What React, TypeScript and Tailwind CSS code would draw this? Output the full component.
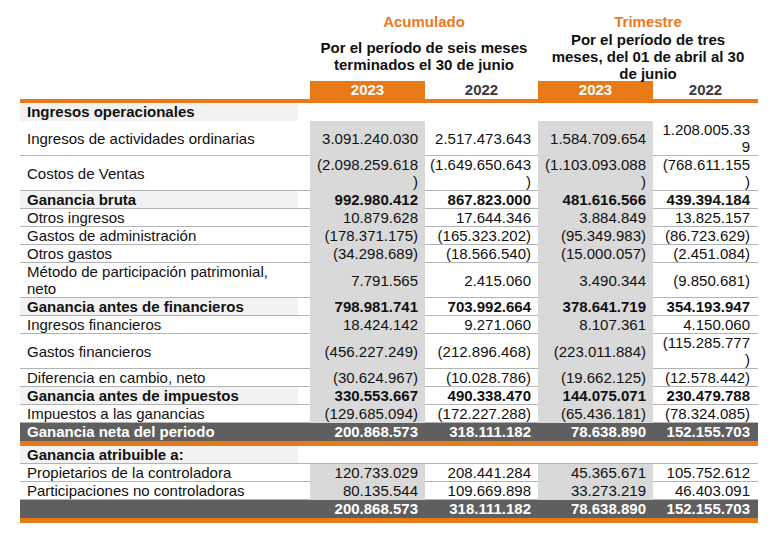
type Kind = "section" | "row" | "bold" | "total";

type Row = {
  kind: Kind;
  label: string;
  values?: string[];
  border?: boolean;
};

const rows: Row[] = [
  { kind: "section", label: "Ingresos operacionales" },
  {
    kind: "row",
    label: "Ingresos de actividades ordinarias",
    values: ["3.091.240.030", "2.517.473.643", "1.584.709.654", "1.208.005.339"],
  },
  {
    kind: "row",
    label: "Costos de Ventas",
    values: ["(2.098.259.618)", "(1.649.650.643)", "(1.103.093.088)", "(768.611.155)"],
  },
  {
    kind: "bold",
    label: "Ganancia bruta",
    values: ["992.980.412", "867.823.000", "481.616.566", "439.394.184"],
  },
  {
    kind: "row",
    label: "Otros ingresos",
    values: ["10.879.628", "17.644.346", "3.884.849", "13.825.157"],
  },
  {
    kind: "row",
    label: "Gastos de administración",
    values: ["(178.371.175)", "(165.323.202)", "(95.349.983)", "(86.723.629)"],
  },
  {
    kind: "row",
    label: "Otros gastos",
    values: ["(34.298.689)", "(18.566.540)", "(15.000.057)", "(2.451.084)"],
  },
  {
    kind: "row",
    label: "Método de participación patrimonial, neto",
    values: ["7.791.565", "2.415.060", "3.490.344", "(9.850.681)"],
  },
  {
    kind: "bold",
    label: "Ganancia antes de financieros",
    values: ["798.981.741", "703.992.664", "378.641.719", "354.193.947"],
  },
  {
    kind: "row",
    label: "Ingresos financieros",
    values: ["18.424.142", "9.271.060", "8.107.361", "4.150.060"],
  },
  {
    kind: "row",
    label: "Gastos financieros",
    values: ["(456.227.249)", "(212.896.468)", "(223.011.884)", "(115.285.777)"],
  },
  {
    kind: "row",
    label: "Diferencia en cambio, neto",
    values: ["(30.624.967)", "(10.028.786)", "(19.662.125)", "(12.578.442)"],
  },
  {
    kind: "bold",
    label: "Ganancia antes de impuestos",
    values: ["330.553.667", "490.338.470", "144.075.071", "230.479.788"],
  },
  {
    kind: "row",
    label: "Impuestos a las ganancias",
    values: ["(129.685.094)", "(172.227.288)", "(65.436.181)", "(78.324.085)"],
  },
  {
    kind: "total",
    label: "Ganancia neta del periodo",
    values: ["200.868.573", "318.111.182", "78.638.890", "152.155.703"],
  },
  { kind: "section", label: "Ganancia atribuible a:", border: true },
  {
    kind: "row",
    label: "Propietarios de la controladora",
    values: ["120.733.029", "208.441.284", "45.365.671", "105.752.612"],
  },
  {
    kind: "row",
    label: "Participaciones no controladoras",
    values: ["80.135.544", "109.669.898", "33.273.219", "46.403.091"],
  },
  {
    kind: "total",
    label: "",
    values: ["200.868.573", "318.111.182", "78.638.890", "152.155.703"],
  },
];

// padding per value column so long figures wrap like the source sheet
const colPad = ["pl-[4px] pr-[7px]", "pl-[3px] pr-[7px]", "pl-[4px] pr-[7px]", "pl-[6px] pr-[8px]"];
const grayCol = [true, false, true, false];

function ValueCell({ row, value, i }: { row: Row; value: string; i: number }) {
  const pad = colPad[i];
  if (row.kind === "total") {
    return (
      <td className={`${pad} border-b-[5px] border-[#e97817] bg-[#5f5f5f] text-right align-middle font-bold leading-[18px] text-white [overflow-wrap:anywhere]`}>
        {value}
      </td>
    );
  }
  const bg = grayCol[i]
    ? "bg-[#d9d9d9] border-b border-[#d9d9d9]"
    : "border-b border-[#b3b3b3]";
  return (
    <td
      className={`${pad} ${bg} text-right align-middle leading-[17px] [overflow-wrap:anywhere] ${
        row.kind === "bold" ? "font-bold" : ""
      }`}
    >
      {value}
    </td>
  );
}

function TableRow({ row }: { row: Row }) {
  if (row.kind === "section") {
    const line = row.border ? "border-b border-[#b3b3b3] leading-[17px]" : "leading-[18px]";
    return (
      <tr>
        <td className={`${line} bg-[#f2f2f2] pl-[7px] font-bold`}>{row.label}</td>
        <td className={line} />
        <td className={line} />
        <td className={line} />
        <td className={line} />
        <td className={line} />
      </tr>
    );
  }

  if (row.kind === "total") {
    return (
      <tr>
        <td className="border-b-[5px] border-[#e97817] bg-[#5f5f5f] pl-[7px] font-bold leading-[18px] text-white">
          {row.label}
        </td>
        <td className="border-b-[5px] border-[#e97817] bg-[#5f5f5f]" />
        {row.values!.map((v, i) => (
          <ValueCell key={i} row={row} value={v} i={i} />
        ))}
      </tr>
    );
  }

  const isBold = row.kind === "bold";
  return (
    <tr>
      <td
        className={`border-b border-[#b3b3b3] pl-[7px] pr-3 align-middle leading-[17px] ${
          isBold ? "bg-[#f2f2f2] font-bold" : ""
        }`}
      >
        {row.label}
      </td>
      <td className="border-b border-[#b3b3b3]" />
      {row.values!.map((v, i) => (
        <ValueCell key={i} row={row} value={v} i={i} />
      ))}
    </tr>
  );
}

export default function App() {
  return (
    <div className="h-[535px] w-[784px] overflow-hidden bg-white pl-5 pt-[13px] font-['Liberation_Sans',Arial,sans-serif] text-[15px] text-[#111]">
      <div className="flex">
        <div className="w-[290px] shrink-0" />
        <div className="flex w-[228px] shrink-0 flex-col items-center font-bold">
          <div className="h-[18px] leading-[18px] text-[#ec7a1c]">Acumulado</div>
          <div className="flex h-[50px] items-center">
            <p className="text-center leading-[17px]">
              Por el período de seis meses terminados el 30 de junio
            </p>
          </div>
        </div>
        <div className="flex w-[220px] shrink-0 flex-col items-center font-bold">
          <div className="h-[18px] leading-[18px] text-[#ec7a1c]">Trimestre</div>
          <div className="flex h-[50px] items-center">
            <p className="w-[200px] text-center leading-[17px]">
              Por el período de tres meses, del 01 de abril al 30 de junio
            </p>
          </div>
        </div>
      </div>

      <table className="w-[738px] table-fixed border-separate border-spacing-0">
        <colgroup>
          <col className="w-[278px]" />
          <col className="w-[12px]" />
          <col className="w-[115px]" />
          <col className="w-[113px]" />
          <col className="w-[115px]" />
          <col className="w-[105px]" />
        </colgroup>
        <thead>
          <tr className="font-bold">
            <th className="border-b-4 border-[#e97817] leading-[18px]" />
            <th className="border-b-4 border-[#e97817]" />
            <th className="border-b-4 border-[#e97817] bg-[#e97817] text-center leading-[18px] text-white">
              2023
            </th>
            <th className="border-b-4 border-[#e97817] text-center leading-[18px] text-[#3a3a3a]">
              2022
            </th>
            <th className="border-b-4 border-[#e97817] bg-[#e97817] text-center leading-[18px] text-white">
              2023
            </th>
            <th className="border-b-4 border-[#e97817] text-center leading-[18px] text-[#3a3a3a]">
              2022
            </th>
          </tr>
        </thead>
        <tbody>
          {rows.map((row, i) => (
            <TableRow key={i} row={row} />
          ))}
        </tbody>
      </table>
    </div>
  );
}
